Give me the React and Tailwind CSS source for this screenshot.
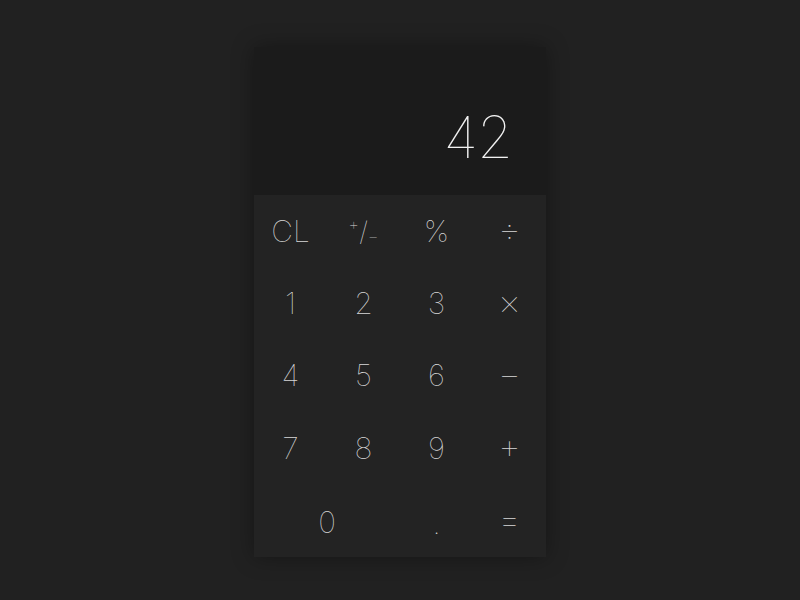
export default function App() {
  const rows = [
    ["CL", "+/-", "%", "÷"],
    ["1", "2", "3", "×"],
    ["4", "5", "6", "−"],
    ["7", "8", "9", "+"],
  ];
  const ops = ["÷", "×", "−", "+", "="];
  const font = { fontFamily: "Inter, 'Liberation Sans', sans-serif" };
  const cell = (k, i, extra = "") => (
    <div
      key={i}
      className={`flex items-center justify-center font-thin text-[#d6d6d6] ${
        ops.includes(k) ? "text-[36px] pb-[4px]" : "text-[30px]"
      } ${extra}`}
    >
      {k === "+/-" ? (
        <span className="flex items-center text-[27px]">
          <span className="text-[17px] leading-none -translate-y-[7px]">+</span>
          <span className="leading-none">/</span>
          <span className="text-[17px] leading-none translate-y-[5px]">−</span>
        </span>
      ) : (
        k
      )}
    </div>
  );
  return (
    <div className="w-[800px] h-[600px] bg-[#212121] flex justify-center pt-[47px]" style={font}>
      <div className="w-[292px] h-[510px] flex flex-col shadow-[0_0_20px_rgba(0,0,0,0.35)]">
        <div className="h-[148px] bg-[#1b1b1b] flex items-end justify-end pr-[34px] pb-[29px]">
          <span className="text-[58px] leading-none font-thin text-[#f2f2f2] tracking-[-1px]">42</span>
        </div>
        <div className="flex-1 bg-[#232323] grid grid-cols-4 grid-rows-5">
          {rows.flat().map((k, i) => cell(k, i))}
          <div className="col-span-2 flex items-center justify-center text-[30px] font-thin text-[#d6d6d6] pt-[3px]">0</div>
          <div className="flex items-center justify-center text-[30px] font-thin text-[#d6d6d6] pt-[6px]">.</div>
          {cell("=", 99)}
        </div>
      </div>
    </div>
  );
}
